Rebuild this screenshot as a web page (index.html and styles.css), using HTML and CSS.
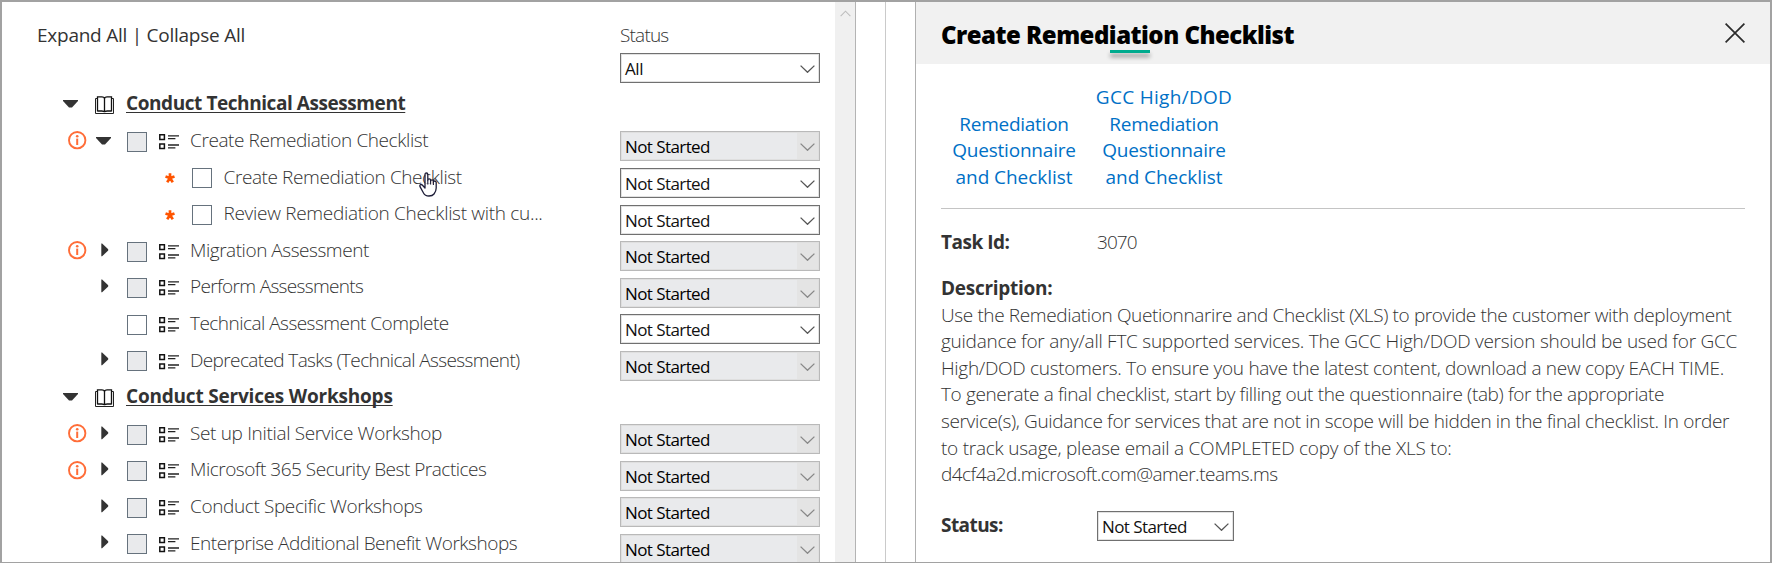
FILE: index.html
```html
<!DOCTYPE html>
<html lang="en">
<head>
<meta charset="utf-8">
<title>Remediation Checklist</title>
<link rel="stylesheet" href="styles.css">
</head>
<body>
<svg class="defs" width="0" height="0" aria-hidden="true">
  <symbol id="down" viewBox="0 0 15 8"><path d="M0 0h15v1L9 7.4H6L0 1z" fill="#333"/></symbol>
  <symbol id="right" viewBox="0 0 8 14"><path d="M.3.5h.8L7.200 6.200v1.400L1.100 13.300H.3z" fill="#333"/></symbol>
  <symbol id="info" viewBox="0 0 19 19"><circle cx="9.2" cy="9.2" r="8.2" fill="none" stroke="#ff6d38" stroke-width="1.9"/><path d="M9.2 7.6V14" stroke="#ff6d38" stroke-width="2"/><circle cx="9.2" cy="5.2" r="1.3" fill="#ff6d38"/></symbol>
  <symbol id="book" viewBox="0 0 19 18"><path d="M.5 2.5v15h18v-15h-2M.5 2.5h2" fill="none" stroke="#222"/><path d="M2.5 15.5V.8h4.2q2.8 0 2.8 2v13.4q0-1.2-2.8-1.2H2.5M16.5 15.5V.8h-4.2q-2.8 0-2.8 2v13.4q0-1.2 2.8-1.2h4.2" fill="none" stroke="#111" stroke-width="1.3"/></symbol>
  <symbol id="list" viewBox="0 0 20 16"><path d="M.8.8h4.6v4.6H.8zM.8 10h4.6v4.6H.8z" fill="none" stroke="#111" stroke-width="1.5"/><path d="M9 1.8h11.3M9 4.7h7.4M9 11h11.3M9 13.8h7.4" fill="none" stroke="#222" stroke-width="1.3"/></symbol>
  <symbol id="star" viewBox="0 0 10 10"><path d="M5 5V.3M5 5L.5 3.4M5 5l4.5-1.6M5 5L2.2 9.2M5 5l2.8 4.2" fill="none" stroke="#ff5400" stroke-width="2.7"/></symbol>
  <symbol id="chevron" viewBox="0 0 15 8"><path d="M.6.6l6.9 6.7L14.4.6" fill="none" stroke="currentColor" stroke-width="1.3"/></symbol>
</svg>

<main class="window">
  <section class="tree">
    <div class="tree-body">
      <header class="toolbar">
        <div class="links-all">Expand All | Collapse All</div>
        <div class="filter">
          <div class="filter-label">Status</div>
          <div class="select"><span class="all">All</span><svg><use href="#chevron"/></svg></div>
        </div>
      </header>

      <div class="row head"><svg class="down"><use href="#down"/></svg><svg class="book"><use href="#book"/></svg><span class="label t-technical">Conduct Technical Assessment</span></div>
      <div class="row task"><svg class="info"><use href="#info"/></svg><svg class="down"><use href="#down"/></svg><i class="box off"></i><svg class="list"><use href="#list"/></svg><span class="label t-create">Create Remediation Checklist</span><div class="select off"><span>Not Started</span><svg><use href="#chevron"/></svg></div></div>
      <div class="row child"><svg class="star"><use href="#star"/></svg><i class="box"></i><span class="label t-create">Create Remediation Checklist</span><div class="select"><span>Not Started</span><svg><use href="#chevron"/></svg></div></div>
      <div class="row child"><svg class="star"><use href="#star"/></svg><i class="box"></i><span class="label t-review">Review Remediation Checklist with cu...</span><div class="select"><span>Not Started</span><svg><use href="#chevron"/></svg></div></div>
      <div class="row task"><svg class="info"><use href="#info"/></svg><svg class="right"><use href="#right"/></svg><i class="box off"></i><svg class="list"><use href="#list"/></svg><span class="label t-migration">Migration Assessment</span><div class="select off"><span>Not Started</span><svg><use href="#chevron"/></svg></div></div>
      <div class="row task"><b></b><svg class="right"><use href="#right"/></svg><i class="box off"></i><svg class="list"><use href="#list"/></svg><span class="label t-perform">Perform Assessments</span><div class="select off"><span>Not Started</span><svg><use href="#chevron"/></svg></div></div>
      <div class="row task"><b></b><b></b><i class="box"></i><svg class="list"><use href="#list"/></svg><span class="label t-complete">Technical Assessment Complete</span><div class="select"><span>Not Started</span><svg><use href="#chevron"/></svg></div></div>
      <div class="row task"><b></b><svg class="right"><use href="#right"/></svg><i class="box off"></i><svg class="list"><use href="#list"/></svg><span class="label t-deprecated">Deprecated Tasks (Technical Assessment)</span><div class="select off"><span>Not Started</span><svg><use href="#chevron"/></svg></div></div>
      <div class="row head"><svg class="down"><use href="#down"/></svg><svg class="book"><use href="#book"/></svg><span class="label t-services">Conduct Services Workshops</span></div>
      <div class="row task"><svg class="info"><use href="#info"/></svg><svg class="right"><use href="#right"/></svg><i class="box off"></i><svg class="list"><use href="#list"/></svg><span class="label t-setup">Set up Initial Service Workshop</span><div class="select off"><span>Not Started</span><svg><use href="#chevron"/></svg></div></div>
      <div class="row task"><svg class="info"><use href="#info"/></svg><svg class="right"><use href="#right"/></svg><i class="box off"></i><svg class="list"><use href="#list"/></svg><span class="label t-security">Microsoft 365 Security Best Practices</span><div class="select off"><span>Not Started</span><svg><use href="#chevron"/></svg></div></div>
      <div class="row task"><b></b><svg class="right"><use href="#right"/></svg><i class="box off"></i><svg class="list"><use href="#list"/></svg><span class="label t-specific">Conduct Specific Workshops</span><div class="select off"><span>Not Started</span><svg><use href="#chevron"/></svg></div></div>
      <div class="row task"><b></b><svg class="right"><use href="#right"/></svg><i class="box off"></i><svg class="list"><use href="#list"/></svg><span class="label t-enterprise">Enterprise Additional Benefit Workshops</span><div class="select off"><span>Not Started</span><svg><use href="#chevron"/></svg></div></div>
    </div>
    <div class="scrollbar"><svg viewBox="0 0 12 7"><path d="M.7 6.3L6 1l5.3 5.3" fill="none" stroke="#bdbdbd" stroke-width="1.2"/></svg></div>
  </section>

  <div class="gutter"></div>

  <section class="detail">
    <header class="detail-head">
      <h1>Create Remediation Checklist</h1>
      <svg class="close" viewBox="0 0 20 20"><path d="M.6.6l18.800 18.800M19.400.6L.6 19.400" stroke="#2b2b2b" stroke-width="1.700"/></svg>
      <div class="accent"></div>
    </header>
    <div class="detail-body">
      <div class="docs">
        <a><span class="t-rem">Remediation</span><span class="t-que">Questionnaire</span><span class="t-chk">and Checklist</span></a>
        <a><span class="t-gcc">GCC High/DOD</span><span class="t-rem">Remediation</span><span class="t-que">Questionnaire</span><span class="t-chk">and Checklist</span></a>
      </div>
      <div class="field"><strong class="t-taskid">Task Id:</strong><span class="t-id">3070</span></div>
      <div class="description">
        <strong class="t-desc">Description:</strong>
        <span class="l1">Use the Remediation Quetionnarire and Checklist (XLS) to provide the customer with deployment</span>
        <span class="l2">guidance for any/all FTC supported services. The GCC High/DOD version should be used for GCC</span>
        <span class="l3">High/DOD customers. To ensure you have the latest content, download a new copy EACH TIME.</span>
        <span class="l4">To generate a final checklist, start by filling out the questionnaire (tab) for the appropriate</span>
        <span class="l5">service(s), Guidance for services that are not in scope will be hidden in the final checklist. In order</span>
        <span class="l6">to track usage, please email a COMPLETED copy of the XLS to:</span>
        <span class="l7">d4cf4a2d.microsoft.com@amer.teams.ms</span>
      </div>
      <div class="field status"><strong class="t-status">Status:</strong><div class="select"><span>Not Started</span><svg><use href="#chevron"/></svg></div></div>
    </div>
  </section>

  <svg class="cursor" viewBox="0 0 19 25"><path d="M6 15V2.4Q6 1 7.4 1t1.4 1.4V8q0-1.2 1.4-1.2T11.600 8v1q0-1.200 1.400-1.200T14.400 9v1q0-1 1.300-1T17.200 10.400V16q0 3.200-2.200 6-1.500 2-5 2-4 0-5.500-3L1 14.600q-.5-1.400.5-1.900t2 .5L6 16z" fill="#fff" fill-opacity=".75" stroke="#1d1d38" stroke-width="1.3" stroke-linejoin="round"/><path d="M8.800 8v4.500M11.600 9v3.500M14.400 10v3" stroke="#1d1d38" stroke-width="1.1"/></svg>
</main>
</body>
</html>
```
FILE: styles.css
```css
* { box-sizing: border-box; }
body {
  margin: 0;
  background: #fff;
  color: #333;
  font: 300 19px/22px "Open Sans", "Noto Sans", sans-serif;
}
svg { display: block; }
.defs { position: absolute; }
.window {
  position: relative;
  display: grid;
  grid-template-columns: 854px 59px 1fr;
  height: 563px;
  overflow: hidden;
  border: 2px solid #a2a2a2;
  border-bottom-width: 1px;
}

/* Task tree */
.tree {
  display: flex;
  min-height: 0;
  overflow: hidden;
  border-right: 1px solid #b4b4b4;
}
.tree-body { flex: 1; padding-right: 15px; white-space: nowrap; }
.scrollbar { width: 20px; background: #f0f0f0; padding: 8px 0 0 5px; }
.scrollbar svg { width: 11px; height: 7px; }
.toolbar {
  display: flex;
  justify-content: space-between;
  height: 90.1px;
  padding: 22px 0 0 35px;
  line-height: 22px;
}
.links-all { font-weight: 400; letter-spacing: -.25px; }
.filter { width: 200px; }
.filter-label { letter-spacing: -.8px; margin-bottom: 7px; }

.row { display: grid; align-items: start; height: 36.6px; }
.task { grid-template-columns: 28px 31px 32px 31px 1fr 200px; padding-left: 66px; }
.child { grid-template-columns: 27px 32px 1fr 200px; padding-left: 163px; }
.head { grid-template-columns: 32px 31px 1fr; padding-left: 61px; }
.label { margin-top: .4px; }
.child .label { margin-left: -.5px; }
.head .label {
  margin-top: 0;
  font-weight: 700;
  text-decoration: underline 1px;
  text-underline-offset: 2px;
  text-decoration-skip-ink: none;
}
.row .select { margin-top: 2.8px; }
.info { width: 19px; height: 19px; margin-top: 2.6px; }
.down { width: 15px; height: 8px; margin-top: 8px; }
.right { width: 8px; height: 14px; margin: 4.2px 0 0 5px; }
.book { width: 19px; height: 18px; margin-top: 4px; }
.list { width: 20px; height: 16px; margin-top: 5.4px; }
.star { width: 10px; height: 10px; margin-top: 8px; }
.box { width: 20px; height: 20px; margin-top: 3.1px; border: 1px solid #66727d; background: #fff; }
.box.off { background: #e9eaec; }

.select {
  display: flex;
  height: 30px;
  border: 1px solid #707070;
  box-shadow: inset 0 0 0 1px #e2e2e2;
  color: #111;
  font-size: 17px;
  font-weight: 400;
  line-height: 29px;
  letter-spacing: -.58px;
  white-space: nowrap;
}
.select span { flex: 1; padding-left: 4px; }
.select .all { letter-spacing: -.45px; }
.select svg { width: 21px; height: 26px; margin: 1px; padding: 10px 3px 8px; color: #555; }
.select.off { border-color: #b9b9b9; background: #e9eaec; box-shadow: inset 0 0 0 1px #dfdfdf; color: #000; }
.select.off svg { background: #e4e4e4; color: #888; }

/* Space between the panels, with its rule */
.gutter { margin-left: 29px; border-left: 1px solid #cacaca; }

/* Detail panel */
.detail { border-left: 1px solid #b0b0b0; min-width: 0; }
.detail-head {
  position: relative;
  display: flex;
  justify-content: space-between;
  height: 62px;
  padding: 0 25px 0 25px;
  background: #f1f1f1;
}
h1 {
  margin: 0;
  color: #000;
  font-size: 24px;
  font-weight: 800;
  line-height: 65px;
  letter-spacing: -.52px;
}
.close { width: 20px; height: 20px; margin-top: 21px; }
.accent {
  position: absolute;
  left: 194px;
  top: 48px;
  width: 40px;
  height: 3px;
  background: #00ab8e;
  box-shadow: 0 4px 4px rgba(0, 0, 0, .4);
}
.detail-body { padding: 19.2px 25px 0 25px; line-height: 26.6px; }
.docs {
  display: grid;
  grid-template-columns: 150px 150px;
  align-items: end;
  height: 125.8px;
  margin-bottom: 20.1px;
  padding-bottom: 17.6px;
  border-bottom: 1px solid #c4c4c4;
  color: #0070c6;
  font-weight: 400;
  text-align: center;
}
.docs a { display: grid; margin: 0 2px 0 -2px; }
.field { display: grid; grid-template-columns: 156px 137px; align-items: start; margin-bottom: 19.4px; }
.field.status { margin: 23.1px 0 0; }
.field.status strong { margin-top: 1.3px; }
strong { font-weight: 700; }
.description { display: grid; white-space: nowrap; }

/* Tracking of the individual captions */
.t-technical { letter-spacing: -.43px; }
.t-services { letter-spacing: -.2px; }
.t-create { letter-spacing: -.4px; }
.t-review { letter-spacing: -.31px; }
.t-migration { letter-spacing: -.46px; }
.t-perform { letter-spacing: -.66px; }
.t-complete { letter-spacing: -.53px; }
.t-deprecated { letter-spacing: -.62px; }
.t-setup { letter-spacing: -.34px; }
.t-security { letter-spacing: -.49px; }
.t-specific { letter-spacing: -.38px; }
.t-enterprise { letter-spacing: -.46px; }
.t-rem { letter-spacing: -.26px; }
.t-que { letter-spacing: -.21px; }
.t-chk { letter-spacing: -.05px; }
.t-gcc { letter-spacing: .3px; }
.t-taskid { letter-spacing: -.5px; }
.t-id { letter-spacing: -.96px; }
.t-desc { letter-spacing: -.28px; }
.t-status { letter-spacing: -.56px; }
.l1 { letter-spacing: -.375px; }
.l2 { letter-spacing: -.262px; }
.l3 { letter-spacing: -.308px; }
.l4 { letter-spacing: -.37px; }
.l5 { letter-spacing: -.358px; }
.l6 { letter-spacing: -.24px; }
.l7 { letter-spacing: -.52px; }

.cursor { position: absolute; left: 417px; top: 170px; width: 19px; height: 25px; }
```
